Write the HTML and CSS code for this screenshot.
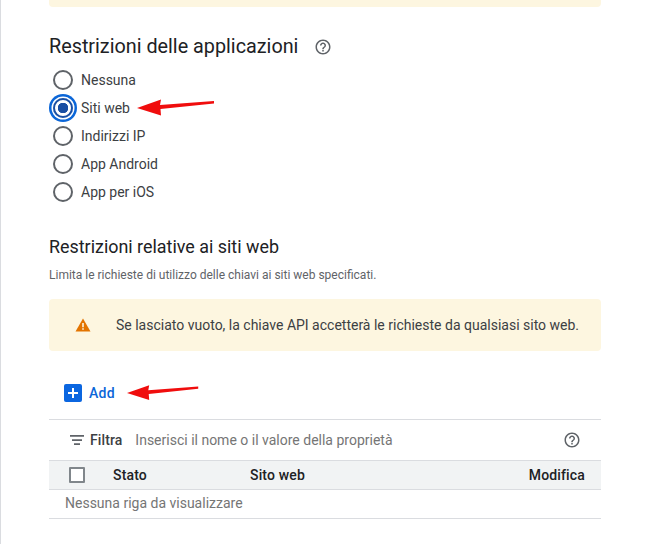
FILE: index.html
```html
<!DOCTYPE html>
<html lang="it">
<head>
<meta charset="utf-8">
<title>Restrizioni delle applicazioni</title>
<link rel="stylesheet" href="styles.css">
</head>
<body>
<main class="page">
  <div class="banner-top"></div>
  <h2 class="title-app">Restrizioni delle applicazioni
    <svg class="help help-title" viewBox="0 0 24 24" width="18" height="18"><path fill="#5f6368" d="M11 18h2v-2h-2v2zm1-16C6.480 2 2 6.480 2 12s4.480 10 10 10 10-4.480 10-10S17.520 2 12 2zm0 18c-4.410 0-8-3.590-8-8s3.590-8 8-8 8 3.590 8 8-3.590 8-8 8zm0-14c-2.210 0-4 1.790-4 4h2c0-1.100.9-2 2-2s2 .9 2 2c0 2-3 1.750-3 5h2c0-2.250 3-2.500 3-5 0-2.210-1.790-4-4-4z"/></svg>
  </h2>
  <div class="radios">
    <div class="radio-row"><span class="radio"></span><span>Nessuna</span></div>
    <div class="radio-row"><span class="radio checked"></span><span>Siti web</span>
      <svg class="arrow arrow-one" viewBox="0 0 80 20" width="80" height="20"><path fill="#f00d0d" d="M0 10 L24 1.500 L23 7 L77 3 L77 5.500 L23.500 11 L24 17.500 Z"/></svg>
    </div>
    <div class="radio-row"><span class="radio"></span><span>Indirizzi IP</span></div>
    <div class="radio-row"><span class="radio"></span><span>App Android</span></div>
    <div class="radio-row"><span class="radio"></span><span>App per iOS</span></div>
  </div>
  <h3 class="title-web">Restrizioni relative ai siti web</h3>
  <p class="hint">Limita le richieste di utilizzo delle chiavi ai siti web specificati.</p>
  <div class="warning">
    <svg class="warning-icon" viewBox="0 0 16 14" width="16" height="14"><path fill="#e37400" d="M8 .5 15.500 13.500H.5z"/><path fill="#fdf6e0" d="M7.200 5h1.600v4.300H7.200zM7.200 10.200h1.600v1.600H7.200z"/></svg>
    <span>Se lasciato vuoto, la chiave API accetterà le richieste da qualsiasi sito web.</span>
  </div>
  <div class="add">
    <svg class="add-icon" viewBox="0 0 18 18" width="18" height="18"><rect width="18" height="18" rx="2" fill="#0b66e0"/><path fill="#fff" d="M8 4h2v4h4v2h-4v4H8v-4H4V8h4z"/></svg>
    <span>Add</span>
    <svg class="arrow arrow-two" viewBox="0 0 80 20" width="74" height="20"><path fill="#f00d0d" d="M0 10 L24 1.500 L23 7 L77 3 L77 5.500 L23.500 11 L24 17.500 Z"/></svg>
  </div>
  <div class="filter">
    <svg class="filter-icon" viewBox="0 0 14 10" width="14" height="10"><path fill="#5f6368" d="M0 0h14v1.700H0zM2 4.200h10v1.700H2zM4 8.300h6V10H4z"/></svg>
    <span class="filter-label">Filtra</span>
    <span class="filter-input">Inserisci il nome o il valore della proprietà</span>
    <svg class="help" viewBox="0 0 24 24" width="18" height="18"><path fill="#5f6368" d="M11 18h2v-2h-2v2zm1-16C6.480 2 2 6.480 2 12s4.480 10 10 10 10-4.480 10-10S17.520 2 12 2zm0 18c-4.410 0-8-3.590-8-8s3.590-8 8-8 8 3.590 8 8-3.590 8-8 8zm0-14c-2.210 0-4 1.790-4 4h2c0-1.100.9-2 2-2s2 .9 2 2c0 2-3 1.750-3 5h2c0-2.250 3-2.500 3-5 0-2.210-1.790-4-4-4z"/></svg>
  </div>
  <div class="thead">
    <span class="checkbox"></span>
    <span class="col-state">Stato</span>
    <span class="col-site">Sito web</span>
    <span class="col-edit">Modifica</span>
  </div>
  <div class="empty">Nessuna riga da visualizzare</div>
</main>
</body>
</html>
```

FILE: styles.css
```css
* { box-sizing: border-box; }
html, body { margin: 0; padding: 0; background: #fff; }
body { width: 650px; height: 544px; overflow: hidden; font-family: Roboto, "Liberation Sans", sans-serif; color: #3c4043; }
.page { width: 602px; height: 544px; padding-left: 48px; padding-right: 1px; border-left: 1px solid #dadce0; }
.banner-top { height: 7px; background: #fdf6e0; border-radius: 0 0 4px 4px; }
.title-app { margin: 27px 0 0; height: 26px; display: flex; align-items: center; font-size: 19.800px; font-weight: 400; color: #202124; line-height: 26px; }
.help { display: block; flex: none; }
.help-title { margin-left: 16px; }
.radios { margin-top: 6px; }
.radio-row { position: relative; display: flex; align-items: center; height: 28px; font-size: 14px; color: #3c4043; }
.radio { width: 20px; height: 20px; margin: 0 8px 0 4px; border: 2px solid #5f6368; border-radius: 50%; flex: none; background: #fff; }
.radio.checked { border-color: #1a4fa3; background: radial-gradient(circle, #1a4fa3 0 5px, #fff 5.500px); box-shadow: 0 0 0 1.500px #fff, 0 0 0 4px #0b66d8; }
.arrow { position: absolute; }
.arrow-one { left: 88px; top: 4px; }
.title-web { margin: 29px 0 0; height: 24px; font-size: 17.900px; font-weight: 400; line-height: 24px; color: #202124; }
.hint { margin: 7px 0 0; height: 18px; font-size: 12px; line-height: 18px; color: #5f6368; }
.warning { margin-top: 15px; height: 52px; display: flex; align-items: center; padding-left: 26px; background: #fdf6e0; border-radius: 4px; font-size: 14px; color: #3c4043; }
.warning-icon { flex: none; margin-right: 25px; }
.add { position: relative; height: 68px; display: flex; align-items: center; padding: 16px 0 0 15px; font-size: 14px; font-weight: 500; color: #0b66d8; letter-spacing: .25px; }
.add-icon { flex: none; margin-right: 7px; }
.arrow-two { left: 78px; top: 32px; }
.filter { height: 41px; display: flex; align-items: center; padding: 0 20px 0 21px; border-top: 1px solid #dadce0; font-size: 14px; }
.filter-icon { flex: none; margin-right: 6px; }
.filter-label { font-weight: 500; color: #3c4043; margin-right: 13px; letter-spacing: .1px; }
.filter-input { flex: 1; color: #757575; }
.thead { height: 30px; display: flex; align-items: center; padding: 0 16px 0 20px; background: #f1f3f4; border-top: 1px solid #dadce0; border-bottom: 1px solid #dadce0; font-size: 14px; font-weight: 500; color: #202124; letter-spacing: .15px; }
.checkbox { width: 16px; height: 16px; border: 2px solid #80868b; flex: none; border-radius: 1px; background: #fff; }
.col-state { margin-left: 28px; width: 137px; }
.col-site { flex: 1; }
.col-edit { text-align: right; }
.empty { height: 29px; padding-left: 16px; border-bottom: 1px solid #dadce0; font-size: 14px; line-height: 27px; color: #757575; }
```
